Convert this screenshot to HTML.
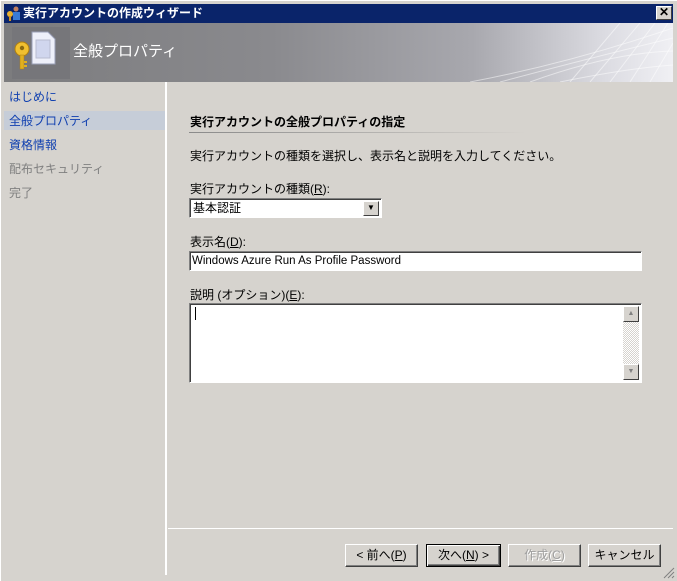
<!DOCTYPE html>
<html><head><meta charset="utf-8"><style>
*{margin:0;padding:0;box-sizing:border-box}
body{width:677px;height:581px;background:#d6d3ce;font-family:"Liberation Sans","Noto Sans CJK JP","IPAGothic",sans-serif;font-size:12px;color:#000;position:relative;overflow:hidden}
.a{position:absolute;white-space:nowrap}
.u{text-decoration:underline}
.btn{position:absolute;top:544px;height:23px;background:#d6d3ce;border:1px solid;border-color:#fff #404040 #404040 #fff;box-shadow:inset -1px -1px 0 #808080;text-align:center;line-height:20px;font-size:12px}
.in{position:absolute;background:#fff;border:1px solid;border-color:#808080 #fff #fff #808080;box-shadow:inset 1px 1px 0 #404040}
</style></head><body>
<div class="a" style="left:0;top:0;width:677px;height:581px;border-left:1px solid #fff;border-top:1px solid #fff"></div>
<div class="a" style="left:4px;top:4px;width:669px;height:19px;background:#0a246a"></div>
<svg class="a" style="left:5px;top:5px" width="16" height="16"><circle cx="5" cy="9" r="3" fill="#e8b030"/><rect x="4" y="11" width="2" height="5" fill="#d09020"/><circle cx="11" cy="4" r="2.5" fill="#c08060"/><rect x="8" y="7" width="7" height="8" fill="#3a7bd5"/></svg>
<div class="a" style="left:23px;top:5px;color:#fff;font-weight:bold;font-size:12px;line-height:16px">実行アカウントの作成ウィザード</div>
<div class="a" style="left:656px;top:6px;width:16px;height:14px;background:#d6d3ce;border:1px solid;border-color:#fff #404040 #404040 #fff;font-size:12px;line-height:11px;text-align:center;font-weight:bold">✕</div>
<div class="a" style="left:4px;top:23px;width:669px;height:59px;background:linear-gradient(90deg,#7c7c7e 0%,#8a8a8e 40%,#a8a8ae 70%,#dcdce2 90%,#f0f0f4 100%)"></div>
<svg class="a" style="left:470px;top:23px" width="203" height="59"><g stroke="#fff" stroke-opacity=".5" fill="none"><path d="M0 59 Q100 40 203 5"/><path d="M30 59 Q120 35 203 15"/><path d="M60 59 Q140 30 203 28"/><path d="M90 59 Q160 45 203 42"/><path d="M120 59L170 0"/><path d="M140 59L185 0"/><path d="M160 59L198 0"/><path d="M180 59L203 20"/><path d="M100 59L150 0"/></g></svg>
<div class="a" style="left:12px;top:27px;width:58px;height:52px;background:#76767a"></div>
<svg class="a" style="left:12px;top:28px" width="48" height="48"><path d="M20 4h16l7 7v25H20z" fill="#eef0fa" stroke="#9aa0b8"/><rect x="24" y="12" width="14" height="18" fill="#d0d6ee" stroke="#b8bcd0"/><circle cx="10" cy="21" r="7" fill="#f0c030" stroke="#b08010"/><circle cx="10" cy="20" r="2.2" fill="#8a6a10"/><rect x="8" y="27" width="4" height="14" fill="#e0b020" stroke="#b08010" stroke-width=".5"/><rect x="12" y="33" width="3" height="2" fill="#e0b020"/><rect x="12" y="37" width="3" height="2" fill="#e0b020"/></svg>
<div class="a" style="left:73px;top:42px;color:#fff;font-size:15px;line-height:20px">全般プロパティ</div>
<div class="a" style="left:165px;top:82px;width:2px;height:493px;background:#fff"></div>
<div class="a" style="left:4px;top:111px;width:161px;height:19px;background:#c6cdd8"></div>
<div class="a" style="left:9px;top:89px;color:#1040b0;line-height:16px">はじめに</div>
<div class="a" style="left:9px;top:113px;color:#1040b0;line-height:16px">全般プロパティ</div>
<div class="a" style="left:9px;top:137px;color:#1040b0;line-height:16px">資格情報</div>
<div class="a" style="left:9px;top:161px;color:#808080;line-height:16px">配布セキュリティ</div>
<div class="a" style="left:9px;top:185px;color:#808080;line-height:16px">完了</div>
<div class="a" style="left:190px;top:114px;font-weight:bold;line-height:16px">実行アカウントの全般プロパティの指定</div>
<div class="a" style="left:189px;top:132px;width:337px;height:1px;background:linear-gradient(90deg,#8a8a8a,#d6d3ce)"></div>
<div class="a" style="left:190px;top:148px;line-height:16px">実行アカウントの種類を選択し、表示名と説明を入力してください。</div>
<div class="a" style="left:190px;top:181px;line-height:16px">実行アカウントの種類(<span class="u">R</span>):</div>
<div class="in" style="left:189px;top:198px;width:193px;height:20px"><span class="a" style="left:3px;top:1px;line-height:16px">基本認証</span><div class="a" style="right:2px;top:2px;width:16px;height:15px;background:#d6d3ce;border:1px solid;border-color:#fff #404040 #404040 #fff;font-size:8px;line-height:12px;text-align:center">▼</div></div>
<div class="a" style="left:190px;top:234px;line-height:16px">表示名(<span class="u">D</span>):</div>
<div class="in" style="left:189px;top:251px;width:453px;height:20px"><span class="a" style="left:2px;top:2px;font-size:11.5px;line-height:14px">Windows Azure Run As Profile Password</span></div>
<div class="a" style="left:190px;top:287px;line-height:16px">説明 (オプション)(<span class="u">E</span>):</div>
<div class="in" style="left:189px;top:303px;width:453px;height:80px"><div class="a" style="left:5px;top:3px;width:1px;height:13px;background:#000"></div><div class="a" style="right:2px;top:2px;width:16px;height:74px;background:repeating-conic-gradient(#fff 0 25%,#d6d3ce 0 50%) 0 0/2px 2px"></div><div class="a" style="right:2px;top:2px;width:16px;height:16px;background:#d6d3ce;border:1px solid;border-color:#fff #404040 #404040 #fff;font-size:7px;line-height:13px;text-align:center;color:#808080">▲</div><div class="a" style="right:2px;bottom:2px;width:16px;height:16px;background:#d6d3ce;border:1px solid;border-color:#fff #404040 #404040 #fff;font-size:7px;line-height:13px;text-align:center;color:#808080">▼</div></div>
<div class="a" style="left:168px;top:528px;width:505px;height:1px;background:#fff"></div>
<div class="btn" style="left:345px;width:73px">&lt; 前へ(<span class="u">P</span>)</div>
<div class="btn" style="left:426px;width:75px;border:1px solid #000;box-shadow:inset 1px 1px 0 #fff,inset -1px -1px 0 #404040,inset -2px -2px 0 #808080">次へ(<span class="u">N</span>) &gt;</div>
<div class="btn" style="left:508px;width:73px;color:#a0a0a0;text-shadow:1px 1px 0 #fff">作成(<span class="u">C</span>)</div>
<div class="btn" style="left:588px;width:73px">キャンセル</div>
<svg class="a" style="left:663px;top:567px" width="12" height="12"><path d="M11 1L1 11M11 5L5 11M11 9L9 11" stroke="#808080"/></svg>
</body></html>
